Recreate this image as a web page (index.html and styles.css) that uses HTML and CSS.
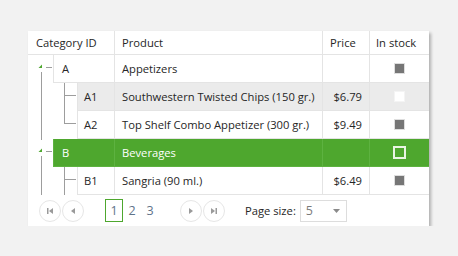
FILE: index.html
```html
<!DOCTYPE html>
<html>
<head>
<meta charset="utf-8">
<link rel="stylesheet" href="styles.css">
</head>
<body>
<div class="grid">
  <div class="row head">
    <div class="c c1">Category ID</div>
    <div class="c c2">Product</div>
    <div class="c c3">Price</div>
    <div class="c c4">In stock</div>
  </div>

  <div class="row">
    <svg class="gut" width="25" height="28" viewBox="0 0 25 28"><polygon points="14,9.5 14,13 10.5,13" fill="#4ea72e"/><rect x="18" y="12" width="6" height="1" fill="#9d9d9d"/><rect x="13" y="17" width="1" height="11" fill="#9d9d9d"/></svg>
    <div class="c id pid">A</div>
    <div class="c c2">Appetizers</div>
    <div class="c c3"></div>
    <div class="c c4"><span class="chk on"></span></div>
  </div>

  <div class="row alt">
    <svg class="gut" width="49" height="28" viewBox="0 0 49 28"><rect x="13" y="0" width="1" height="28" fill="#9d9d9d"/><rect x="36" y="0" width="1" height="28" fill="#9d9d9d"/><rect x="36" y="12" width="12" height="1" fill="#9d9d9d"/></svg>
    <div class="c id cid">A1</div>
    <div class="c c2">Southwestern Twisted Chips (150 gr.)</div>
    <div class="c c3 num">$6.79</div>
    <div class="c c4"><span class="chk off"></span></div>
  </div>

  <div class="row">
    <svg class="gut" width="49" height="28" viewBox="0 0 49 28"><rect x="13" y="0" width="1" height="28" fill="#9d9d9d"/><rect x="36" y="0" width="1" height="13" fill="#9d9d9d"/><rect x="36" y="12" width="12" height="1" fill="#9d9d9d"/></svg>
    <div class="c id cid">A2</div>
    <div class="c c2">Top Shelf Combo Appetizer (300 gr.)</div>
    <div class="c c3 num">$9.49</div>
    <div class="c c4"><span class="chk on"></span></div>
  </div>

  <div class="row sel">
    <svg class="gut" width="25" height="28" viewBox="0 0 25 28"><rect x="13" y="0" width="1" height="1" fill="#9d9d9d"/><polygon points="14,9.5 14,13 10.5,13" fill="#4ea72e"/><rect x="18" y="12" width="6" height="1" fill="#9d9d9d"/><rect x="13" y="17" width="1" height="11" fill="#9d9d9d"/></svg>
    <div class="c id pid">B</div>
    <div class="c c2">Beverages</div>
    <div class="c c3"></div>
    <div class="c c4"><span class="chk selchk"></span></div>
  </div>

  <div class="row">
    <svg class="gut" width="49" height="28" viewBox="0 0 49 28"><rect x="13" y="0" width="1" height="28" fill="#9d9d9d"/><rect x="36" y="0" width="1" height="28" fill="#9d9d9d"/><rect x="36" y="12" width="12" height="1" fill="#9d9d9d"/></svg>
    <div class="c id cid">B1</div>
    <div class="c c2">Sangria (90 ml.)</div>
    <div class="c c3 num">$6.49</div>
    <div class="c c4"><span class="chk on"></span></div>
  </div>

  <div class="pager">
    <span class="pbtn"><svg width="8" height="8" viewBox="0 0 8 8"><rect x="1" y="1" width="1.5" height="6" fill="#9a9a9a"/><polygon points="7,1 7,7 3,4" fill="#9a9a9a"/></svg></span>
    <span class="pbtn"><svg width="8" height="8" viewBox="0 0 8 8"><polygon points="6,1 6,7 2,4" fill="#9a9a9a"/></svg></span>
    <span class="pages">
      <span class="pg cur">1</span>
      <span class="pg">2</span>
      <span class="pg">3</span>
    </span>
    <span class="pbtn"><svg width="8" height="8" viewBox="0 0 8 8"><polygon points="2,1 2,7 6,4" fill="#9a9a9a"/></svg></span>
    <span class="pbtn"><svg width="8" height="8" viewBox="0 0 8 8"><polygon points="1,1 1,7 5,4" fill="#9a9a9a"/><rect x="5.5" y="1" width="1.5" height="6" fill="#9a9a9a"/></svg></span>
    <span class="psize">Page size:</span>
    <span class="dd"><span class="ddv">5</span><svg width="7" height="4" viewBox="0 0 7 4"><polygon points="0,0 7,0 3.5,4" fill="#8a8a8a"/></svg></span>
  </div>
</div>
</body>
</html>
```

FILE: styles.css
```css
html, body {
  margin: 0;
  padding: 0;
  background: #f2f2f2;
}
body {
  font-family: "Open Sans", "Noto Sans", sans-serif;
  font-size: 11.2px;
  color: #262626;
}
.grid {
  margin: 31px 0 0 28px;
  width: 401px;
  background: #fff;
  box-shadow: 2px 2px 3px rgba(0, 0, 0, 0.28);
}
.row {
  display: flex;
  height: 28px;
}
.row.head {
  height: 24px;
}
.gut {
  display: block;
  flex: none;
}
.c {
  box-sizing: border-box;
  height: 100%;
  border-bottom: 1px solid #e4e4e4;
  border-right: 1px solid #e4e4e4;
  padding: 0 7px;
  display: flex;
  align-items: center;
  white-space: nowrap;
  overflow: hidden;
  flex: none;
}
.c1 { width: 87px; padding-left: 8px; }
.c2 { width: 208px; padding-left: 7px; }
.c3 { width: 47px; }
.c4 { width: 59px; border-right: none; justify-content: center; }
.head .c4 { justify-content: flex-start; padding-left: 6px; }
.id { border-left: 1px solid #e4e4e4; padding-left: 8px; }
.pid { width: 62px; }
.cid { width: 38px; padding-left: 6px; }
.num { justify-content: flex-end; padding-right: 7px; }
.alt .c { background: #ebebeb; }
.sel .c {
  background: #4ea72e;
  color: #fff;
  border-color: #5db240;
}
.chk {
  display: block;
  box-sizing: border-box;
  width: 11px;
  height: 11px;
  margin-left: -1px;
}
.chk.on {
  background: #767676;
  border: 1px solid #dedede;
}
.chk.off {
  background: #fff;
  border: 1px solid #f4f4f4;
}
.chk.selchk {
  width: 13px;
  height: 13px;
  background: #4ea72e;
  border: 2px solid #e9f5e3;
}
.pager {
  height: 31px;
  display: flex;
  align-items: center;
  padding-left: 11px;
  box-sizing: border-box;
}
.pbtn {
  box-sizing: border-box;
  width: 22px;
  height: 22px;
  border: 1px solid #e6e6e6;
  border-radius: 50%;
  display: flex;
  align-items: center;
  justify-content: center;
  margin-right: 1px;
}
.pages {
  display: flex;
  align-items: center;
  margin: 0 21px 0 20px;
}
.pg {
  width: 18px;
  height: 23px;
  box-sizing: border-box;
  display: flex;
  align-items: center;
  justify-content: center;
  color: #5f7389;
  font-size: 12.5px;
}
.pg.cur {
  border: 1px solid #4ea72e;
}
.psize {
  margin-left: 19px;
}
.dd {
  box-sizing: border-box;
  width: 47px;
  height: 22px;
  border: 1px solid #dddddd;
  margin-left: 4px;
  display: flex;
  align-items: center;
  justify-content: space-between;
  padding: 0 6px 0 5px;
}
.ddv {
  color: #7a7a7a;
  font-size: 12.5px;
}
```
